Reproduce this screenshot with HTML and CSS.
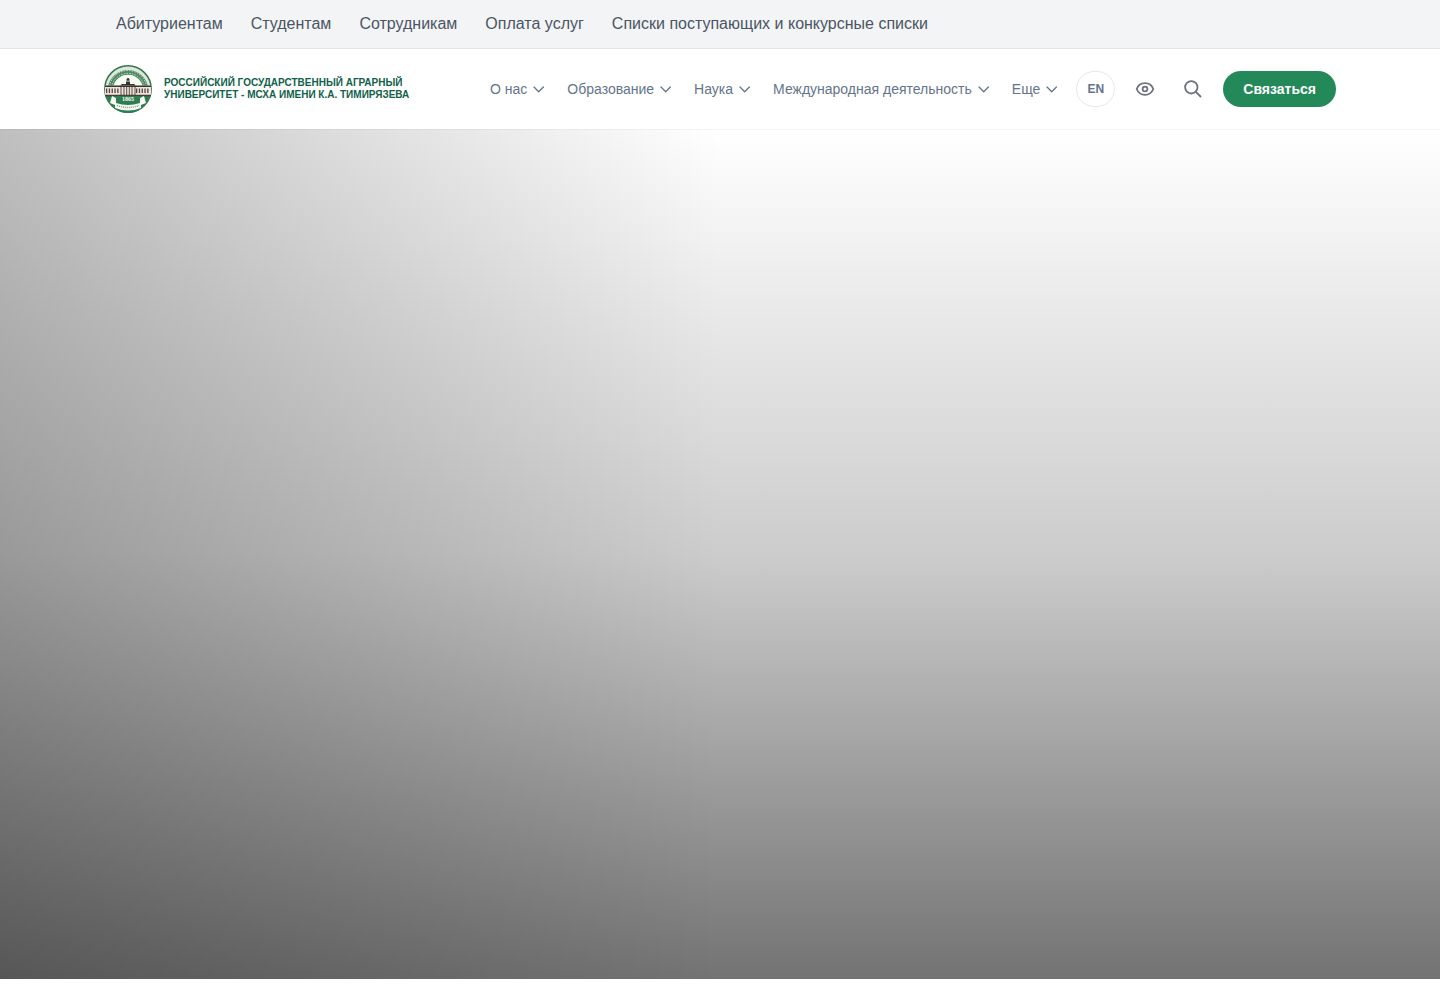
FILE: index.html
```html
<!DOCTYPE html>
<html lang="ru">
<head>
<meta charset="utf-8">
<meta name="viewport" content="width=device-width, initial-scale=1">
<title>РГАУ-МСХА имени К.А. Тимирязева</title>
<link rel="stylesheet" href="styles.css">
</head>
<body>
<svg class="defs" aria-hidden="true"><symbol id="chevron" viewBox="0 0 16 16"><path d="M3 6l4.700 4.700L12.400 6"/></symbol></svg>
<div class="topbar">
  <nav class="container topbar-nav" aria-label="Аудитории">
    <a href="#">Абитуриентам</a>
    <a href="#">Студентам</a>
    <a href="#">Сотрудникам</a>
    <a href="#">Оплата услуг</a>
    <a href="#">Списки поступающих и конкурсные списки</a>
  </nav>
</div>
<header class="header">
  <div class="container header-inner">
    <a class="brand" href="#">
      <svg class="logo" viewBox="0 0 48 48" aria-hidden="true">
        <circle cx="24" cy="24" r="23.200" fill="#dbe9dd" stroke="#39764e" stroke-width="1.500"/>
        <path d="M6.500 22a17.800 17.800 0 0 1 35 0" fill="none" stroke="#4f8862" stroke-width="5"/>
        <path d="M7.500 22a16.800 16.800 0 0 1 33 0M5.500 21a18.800 18.800 0 0 1 37 0" fill="none" stroke="#cfe2d3" stroke-width="1" stroke-dasharray="1.500 1.200"/>
        <path d="M9.500 22a14.700 14.700 0 0 1 29 0z" fill="#f8faf6"/>
        <path d="M2 31h44a22.700 22.700 0 0 1-44 0z" fill="#2f7e50"/>
        <path d="M1 20.500h46v10.500H1z" fill="#eee4dc"/>
        <path d="M16 20.500l2-1.500h12l2 1.500zM22 16.500h4V19h-4zM22.500 14.500a1.500 1.500 0 0 1 3 0v1.200h-3z" fill="#30342f"/>
        <path d="M1 21.300h46" stroke="#37352f" stroke-width="1.600"/>
        <path d="M1 30.500h46" stroke="#453f36" stroke-width="1.400"/>
        <path d="M2 25.700h14M32 25.700h14" stroke="#51473f" stroke-width="4.500" stroke-dasharray="1.300 1.500"/>
        <path d="M17 22v8M20 22v8M22.700 22v8M25.300 22v8M28 22v8M31 22v8" stroke="#5d5148"/>
        <path d="M8 31l4 2v5q12 4 24 0v-5l4-2 2 7-5 2v3q-13 5-26 0v-3l-5-2z" fill="#f7faf7"/>
        <path d="M12 31h24l-2 6q-10 3-20 0z" fill="#2f7e50"/>
        <path d="M13 40.500q11 4 22 0" fill="none" stroke="#7ea28a" stroke-width="1.500" stroke-dasharray="1 1"/>
        <text x="24" y="36" text-anchor="middle" class="logo-year">1865</text>
      </svg>
      <span class="brand-name">РОССИЙСКИЙ ГОСУДАРСТВЕННЫЙ АГРАРНЫЙ<br>УНИВЕРСИТЕТ - МСХА ИМЕНИ К.А. ТИМИРЯЗЕВА</span>
    </a>
    <div class="header-right">
      <nav class="menu" aria-label="Основное меню">
        <button type="button">О нас<svg><use href="#chevron"/></svg></button>
        <button type="button">Образование<svg><use href="#chevron"/></svg></button>
        <button type="button">Наука<svg><use href="#chevron"/></svg></button>
        <button type="button">Международная деятельность<svg><use href="#chevron"/></svg></button>
        <button type="button">Еще<svg><use href="#chevron"/></svg></button>
      </nav>
      <div class="actions">
        <button type="button" class="lang">EN</button>
        <button type="button" class="icon-btn" aria-label="Версия для слабовидящих"><svg viewBox="0 0 20 20"><path d="M1.700 10C3.200 6.200 6.300 4.200 10 4.200s6.800 2 8.300 5.800c-1.500 3.800-4.600 5.800-8.300 5.800S3.200 13.800 1.700 10z"/><circle cx="10" cy="10" r="2.400"/></svg></button>
        <button type="button" class="icon-btn" aria-label="Поиск"><svg viewBox="0 0 20 20"><circle cx="8.300" cy="8.300" r="6.200"/><path d="M12.800 12.800l4.700 4.700"/></svg></button>
        <button type="button" class="contact">Связаться</button>
      </div>
    </div>
  </div>
</header>
<main class="hero"></main>
</body>
</html>
```
FILE: styles.css
```css
* { box-sizing: border-box; }
body {
  margin: 0;
  background: #fff;
  font-family: "Liberation Sans", Arial, sans-serif;
  color: #4b5563;
}
a { color: inherit; text-decoration: none; }
button {
  margin: 0;
  padding: 0;
  border: 0;
  background: none;
  font: inherit;
  color: inherit;
  cursor: pointer;
}
svg { display: block; flex: none; }
.defs { display: none; }
.container {
  width: 100%;
  max-width: 1280px;
  margin: 0 auto;
  padding: 0 24px;
}
.topbar {
  background: #f3f4f6;
  border-bottom: 1px solid #e0e2e5;
}
.topbar-nav {
  display: flex;
  gap: 4px;
  font-size: 16px;
  line-height: 24px;
}
.topbar-nav a { padding: 12px; }
.header {
  background: #fff;
}
.header-inner {
  display: flex;
  align-items: center;
  justify-content: space-between;
  min-height: 80px;
}
.brand {
  display: flex;
  align-items: center;
  gap: 12px;
  color: #116149;
}
.logo { width: 48px; height: 48px; }
.logo-year {
  font-family: "Liberation Serif", serif;
  font-size: 6px;
  font-weight: 700;
  fill: #fff;
}
.brand-name {
  font-size: 10px;
  line-height: 12px;
  font-weight: 700;
  white-space: nowrap;
}
.header-right {
  display: flex;
  align-items: center;
  gap: 16px;
}
.menu {
  display: flex;
  gap: 20px;
  color: #64748b;
  font-size: 14px;
  line-height: 20px;
}
.menu button {
  display: flex;
  align-items: center;
  gap: 4px;
  white-space: nowrap;
}
.menu svg {
  width: 16px;
  height: 16px;
  fill: none;
  stroke: #64748b;
  stroke-width: 1.3;
  stroke-linecap: round;
  stroke-linejoin: round;
}
.actions {
  display: flex;
  align-items: center;
  gap: 12px;
}
.lang {
  min-width: 39px;
  height: 36px;
  padding: 0 10px;
  border: 1px solid #e5e7eb;
  border-radius: 20px;
  color: #64748b;
  font-size: 12px;
  font-weight: 700;
}
.icon-btn {
  display: grid;
  place-items: center;
  width: 36px;
  height: 36px;
}
.icon-btn svg {
  width: 20px;
  height: 20px;
  fill: none;
  stroke: #6b7280;
  stroke-width: 1.8;
  stroke-linecap: round;
  stroke-linejoin: round;
}
.contact {
  height: 36px;
  padding: 0 20px;
  border-radius: 18px;
  background: #238958;
  color: #fff;
  font-size: 14px;
  font-weight: 700;
}
.hero {
  min-height: 85vh;
  border-top: 1px solid rgba(0, 0, 0, 0.04);
  background:
    linear-gradient(to right, rgba(0, 0, 0, 0.25), transparent 50%),
    linear-gradient(to bottom, transparent, rgba(0, 0, 0, 0.2) 50%, rgba(0, 0, 0, 0.55));
  background-origin: border-box;
}
```
